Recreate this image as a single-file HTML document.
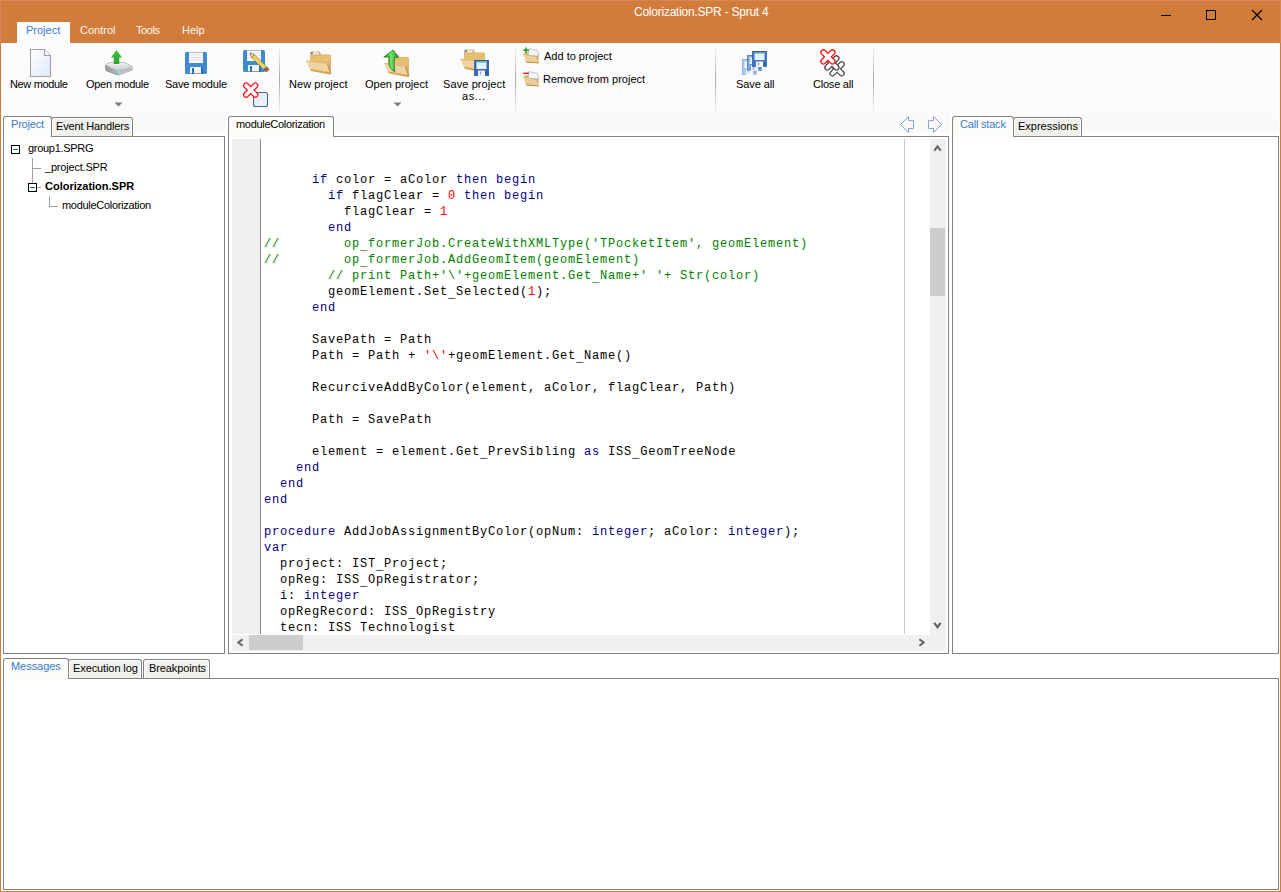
<!DOCTYPE html>
<html><head><meta charset="utf-8"><style>
*{margin:0;padding:0;box-sizing:border-box}
html,body{width:1281px;height:892px;overflow:hidden;background:#fff;font-family:"Liberation Sans",sans-serif;font-size:11px;color:#000}
.a{position:absolute}
.t{position:absolute;white-space:nowrap;line-height:1}
.box{position:absolute;border:1px solid #828282}
.tab{position:absolute;border:1px solid #828282;border-bottom:none;border-radius:3px 3px 0 0}
.code{position:absolute;left:261px;top:139px;width:669px;height:495px;overflow:hidden;background:#fff}
.code pre{position:absolute;left:3px;top:1px;font-family:"Liberation Mono",monospace;font-size:12px;letter-spacing:0.8px;line-height:16px;color:#000}
.u{position:relative;top:2px}.k{color:#000080}.n{color:#ff0000}.c{color:#008000}
</style></head><body>
<div class="a" style="left:0px;top:0px;width:1281px;height:892px;background:#ffffff;"></div>
<div class="a" style="left:1px;top:43px;width:1279px;height:72px;background:#fbfbfb;"></div>
<div class="a" style="left:1px;top:43px;width:1279px;height:1px;background:#ffffff;"></div>
<div class="a" style="left:1px;top:115px;width:225px;height:18px;background:#f9f9f9;"></div>
<div class="a" style="left:228px;top:115px;width:722px;height:18px;background:#f9f9f9;"></div>
<div class="a" style="left:952px;top:115px;width:327px;height:18px;background:#f9f9f9;"></div>
<div class="a" style="left:0px;top:0px;width:1281px;height:43px;background:#d27c3c;"></div>
<div class="a" style="left:0px;top:0px;width:1281px;height:1px;background:#d58a55;"></div>
<div class="a" style="left:0px;top:0px;width:1px;height:43px;background:#d58a55;"></div>
<div class="a" style="left:17px;top:22px;width:53px;height:21px;background:#fcfcfc;"></div>
<div class="t" style="left:634px;top:6px;font-size:12px;letter-spacing:-0.24px;color:#fff;">Colorization.SPR - Sprut 4</div>
<div class="t" style="left:26px;top:25px;font-size:11px;letter-spacing:0px;color:#3a7bd0;">Project</div>
<div class="t" style="left:80px;top:25px;font-size:11px;letter-spacing:0px;color:#fdf6f0;">Control</div>
<div class="t" style="left:136px;top:25px;font-size:11px;letter-spacing:-0.4px;color:#fdf6f0;">Tools</div>
<div class="t" style="left:182px;top:25px;font-size:11px;letter-spacing:0px;color:#fdf6f0;">Help</div>
<div class="a" style="left:1161px;top:15px;width:10px;height:1px;background:#000;"></div>
<div class="a" style="left:1206px;top:10px;width:10px;height:10px;border:1px solid #000"></div>
<svg class="a" style="left:1251px;top:9px;" width="12" height="12" viewBox="0 0 12 12"><path d="M1 1L11 11M11 1L1 11" stroke="#000" stroke-width="1.2"/></svg>
<div class="a" style="left:279px;top:45px;width:1px;height:69px;background:linear-gradient(to bottom,rgba(160,160,160,0),#a8a8a8 50%,rgba(160,160,160,0));"></div>
<div class="a" style="left:515px;top:45px;width:1px;height:69px;background:linear-gradient(to bottom,rgba(160,160,160,0),#a8a8a8 50%,rgba(160,160,160,0));"></div>
<div class="a" style="left:715px;top:45px;width:1px;height:69px;background:linear-gradient(to bottom,rgba(160,160,160,0),#a8a8a8 50%,rgba(160,160,160,0));"></div>
<div class="a" style="left:873px;top:45px;width:1px;height:69px;background:linear-gradient(to bottom,rgba(160,160,160,0),#a8a8a8 50%,rgba(160,160,160,0));"></div>
<div class="t" style="left:10px;top:79px;font-size:11px;letter-spacing:-0.35px;color:#000;">New module</div>
<div class="t" style="left:86px;top:79px;font-size:11px;letter-spacing:-0.3px;color:#000;">Open module</div>
<div class="t" style="left:165px;top:79px;font-size:11px;letter-spacing:-0.22px;color:#000;">Save module</div>
<div class="t" style="left:289px;top:79px;font-size:11px;letter-spacing:0.05px;color:#000;">New project</div>
<div class="t" style="left:365px;top:79px;font-size:11px;letter-spacing:0px;color:#000;">Open project</div>
<div class="t" style="left:443px;top:79px;font-size:11px;letter-spacing:0.1px;color:#000;">Save project</div>
<div class="t" style="left:462px;top:91px;font-size:11px;letter-spacing:0.55px;color:#000;">as...</div>
<div class="t" style="left:544px;top:51px;font-size:11px;letter-spacing:0px;color:#000;">Add to project</div>
<div class="t" style="left:543px;top:74px;font-size:11px;letter-spacing:0px;color:#000;">Remove from project</div>
<div class="t" style="left:736px;top:79px;font-size:11px;letter-spacing:-0.1px;color:#000;">Save all</div>
<div class="t" style="left:813px;top:79px;font-size:11px;letter-spacing:-0.22px;color:#000;">Close all</div>
<svg class="a" style="left:114px;top:102px;" width="9" height="5" viewBox="0 0 9 5"><path d="M0.5 0.5L8.5 0.5L4.5 4.5Z" fill="#7a7a7a"/></svg>
<svg class="a" style="left:393px;top:102px;" width="9" height="5" viewBox="0 0 9 5"><path d="M0.5 0.5L8.5 0.5L4.5 4.5Z" fill="#7a7a7a"/></svg>
<svg class="a" style="left:28px;top:47px" width="26" height="32" viewBox="28 47 26 32"><defs><linearGradient id="pg" x1="0" y1="0" x2="1" y2="1"><stop offset="0" stop-color="#ffffff"/><stop offset="1" stop-color="#dfe8f7"/></linearGradient></defs>
<path d="M30.5 49.5H44.5L50.5 55.5V76.5H30.5Z" fill="url(#pg)" stroke="#a0a0a0" stroke-width="1.1"/>
<path d="M44.5 49.5V55.5H50.5" fill="#f4f6fb" stroke="#a0a0a0" stroke-width="1.1"/></svg>
<svg class="a" style="left:102px;top:46px" width="34" height="32" viewBox="102 46 34 32"><defs><linearGradient id="dr" x1="0" y1="0" x2="0" y2="1"><stop offset="0" stop-color="#f2f2f4"/><stop offset="1" stop-color="#c9c9cc"/></linearGradient>
<linearGradient id="dr2" x1="0" y1="0" x2="1" y2="0"><stop offset="0" stop-color="#9a9a9a"/><stop offset="1" stop-color="#d8d8da"/></linearGradient>
<linearGradient id="ga" x1="0" y1="0" x2="0" y2="1"><stop offset="0" stop-color="#3fc43f"/><stop offset="1" stop-color="#27a22a"/></linearGradient></defs>
<path d="M105.5 65L110 62.5H124L132 66.5L132 70L118 75L106 70.5Z" fill="url(#dr2)" stroke="#8a8a8a" stroke-width="0.9"/>
<path d="M105.5 65L110 62.5H124L132 66.5L118 71Z" fill="url(#dr)"/>
<path d="M118 71L132 66.5V70L118 75Z" fill="#c4c4ca"/><path d="M120 71.5L130 68.3" stroke="#a8a8b0" stroke-width="0.8"/>
<rect x="116.5" y="70.5" width="2" height="3.5" fill="#4fe0d8"/>
<path d="M116.5 50L122 57.5H119.3V64H113.8V57.5H111Z" fill="url(#ga)"/></svg>
<svg class="a" style="left:183px;top:50px" width="26" height="26" viewBox="183 50 26 26"><g transform="translate(185 52) scale(1.0)">
<rect x="0" y="0" width="22" height="22" rx="1.5" fill="#3f8ad0"/>
<rect x="4" y="0" width="14" height="11" fill="#fbfbfd"/>
<path d="M4 0.5H18" stroke="#b8b8b8" stroke-width="1"/><path d="M4 3H18M4 5.5H18M4 8H18" stroke="#d6d6da" stroke-width="0.7"/>
<rect x="5" y="15" width="11" height="7" fill="#f3f3f5"/><path d="M5 21.5H16" stroke="#9a9a9a" stroke-width="1"/>
<rect x="7" y="16" width="2" height="6" fill="#2a74c0"/>
<rect x="16" y="15" width="2" height="7" fill="#1f6cc0"/>
</g></svg>
<svg class="a" style="left:241px;top:47px" width="30" height="28" viewBox="241 47 30 28"><g transform="translate(243 50) scale(1.0)">
<rect x="0" y="0" width="22" height="22" rx="1.5" fill="#3f8ad0"/>
<rect x="4" y="0" width="14" height="11" fill="#fbfbfd"/>
<path d="M4 0.5H18" stroke="#b8b8b8" stroke-width="1"/><path d="M4 3H18M4 5.5H18M4 8H18" stroke="#d6d6da" stroke-width="0.7"/>
<rect x="5" y="15" width="11" height="7" fill="#f3f3f5"/><path d="M5 21.5H16" stroke="#9a9a9a" stroke-width="1"/>
<rect x="7" y="16" width="2" height="6" fill="#2a74c0"/>
<rect x="16" y="15" width="2" height="7" fill="#1f6cc0"/>
</g>
<path d="M250 53L254.4 54.6L251.6 57.4Z" fill="#f3dcb0" stroke="#555" stroke-width="0.6"/>
<path d="M251.6 57.4L254.4 54.6L266.4 66.6L263.6 69.4Z" fill="#f2d356" stroke="#6a6a5a" stroke-width="0.6"/>
<path d="M263.6 69.4L266.4 66.6L267.4 67.6L264.6 70.4Z" fill="#3a9a3a"/>
<path d="M264.6 70.4L267.4 67.6L269.2 69.4L266.4 72.2Z" fill="#d84848" stroke="#6a4a4a" stroke-width="0.5"/>
<path d="M250 53L251.3 53.6L250.6 54.3Z" fill="#333"/></svg>
<svg class="a" style="left:240px;top:80px" width="32" height="30" viewBox="240 80 32 30"><defs><linearGradient id="sq" x1="0" y1="0" x2="1" y2="1"><stop offset="0" stop-color="#d8e4f6"/><stop offset="1" stop-color="#f4f8fd"/></linearGradient></defs>
<rect x="253.5" y="92.5" width="14" height="14" rx="2" fill="url(#sq)" stroke="#4a6888" stroke-width="1.1"/><path d="M246.1 85.5L255.29999999999998 94.69999999999999M255.29999999999998 85.5L246.1 94.69999999999999" stroke="#ff1a1a" stroke-width="6.2" stroke-linecap="round" fill="none"/><path d="M246.1 85.5L255.29999999999998 94.69999999999999M255.29999999999998 85.5L246.1 94.69999999999999" stroke="#ffffff" stroke-width="3.6" stroke-linecap="round" fill="none"/></svg>
<svg class="a" style="left:304px;top:49px" width="30" height="28" viewBox="304 49 30 28"><g transform="translate(306 50.5) scale(1.0)">
<path d="M4 2.5Q4 1 5.5 1H13Q14 1 14.5 2.5L15 4H23.5Q25 4 25 5.5V23.5L4.5 19.5Z" fill="#dcb36a"/>
<path d="M5.5 1.8H12.5V4H5.5Z" fill="#e9eef0"/><rect x="5.2" y="1.6" width="1.6" height="2" fill="#3a8a9a"/>
<path d="M4 5H24.5V12H4Z" fill="#e7bf72"/>
<path d="M0 10L20.5 12.5Q22 12.7 22.3 14L25 23.5L24 24L5.5 20.5Q4.5 20.3 4.2 19.2Z" fill="#eed3a0"/>
<path d="M0 10L20.5 12.5L21 13.2L1.2 11Z" fill="#dcae62"/>
<path d="M4.2 19.2L5.5 20.5L24 24L25 23.5L24.5 22L5 18.5Z" fill="#d6a656"/><path d="M21.5 13.5L24.8 23.3" stroke="#b89048" stroke-width="1.1"/>
</g></svg>
<svg class="a" style="left:380px;top:47px" width="34" height="32" viewBox="380 47 34 32"><g transform="translate(384 53) scale(1.0)">
<path d="M4 2.5Q4 1 5.5 1H13Q14 1 14.5 2.5L15 4H23.5Q25 4 25 5.5V23.5L4.5 19.5Z" fill="#dcb36a"/>
<path d="M5.5 1.8H12.5V4H5.5Z" fill="#e9eef0"/><rect x="5.2" y="1.6" width="1.6" height="2" fill="#3a8a9a"/>
<path d="M4 5H24.5V12H4Z" fill="#e7bf72"/>
<path d="M0 10L20.5 12.5Q22 12.7 22.3 14L25 23.5L24 24L5.5 20.5Q4.5 20.3 4.2 19.2Z" fill="#eed3a0"/>
<path d="M0 10L20.5 12.5L21 13.2L1.2 11Z" fill="#dcae62"/>
<path d="M4.2 19.2L5.5 20.5L24 24L25 23.5L24.5 22L5 18.5Z" fill="#d6a656"/><path d="M21.5 13.5L24.8 23.3" stroke="#b89048" stroke-width="1.1"/>
</g>
<defs><linearGradient id="ga2" x1="0" y1="0" x2="1" y2="0"><stop offset="0" stop-color="#1f8a22"/><stop offset="0.5" stop-color="#6ee86a"/><stop offset="1" stop-color="#1e8a22"/></linearGradient></defs>
<path d="M393.2 50L398.5 57.2H394.5Q393.5 64 394.8 72Q391.5 70 389.5 66Q388.3 61 389.5 57H383.8Z" fill="url(#ga2)" stroke="#1c7a1f" stroke-width="0.8"/></svg>
<svg class="a" style="left:458px;top:47px" width="34" height="32" viewBox="458 47 34 32"><g transform="translate(460 48.5) scale(1.0)">
<path d="M4 2.5Q4 1 5.5 1H13Q14 1 14.5 2.5L15 4H23.5Q25 4 25 5.5V23.5L4.5 19.5Z" fill="#dcb36a"/>
<path d="M5.5 1.8H12.5V4H5.5Z" fill="#e9eef0"/><rect x="5.2" y="1.6" width="1.6" height="2" fill="#3a8a9a"/>
<path d="M4 5H24.5V12H4Z" fill="#e7bf72"/>
<path d="M0 10L20.5 12.5Q22 12.7 22.3 14L25 23.5L24 24L5.5 20.5Q4.5 20.3 4.2 19.2Z" fill="#eed3a0"/>
<path d="M0 10L20.5 12.5L21 13.2L1.2 11Z" fill="#dcae62"/>
<path d="M4.2 19.2L5.5 20.5L24 24L25 23.5L24.5 22L5 18.5Z" fill="#d6a656"/><path d="M21.5 13.5L24.8 23.3" stroke="#b89048" stroke-width="1.1"/>
</g><g transform="translate(474 60) scale(1.0 1.0)" opacity="1.0">
<rect x="0" y="0" width="15" height="16" fill="#3b66b8"/>
<rect x="0" y="0" width="15" height="0.8" fill="#3a5a90"/>
<rect x="0" y="0" width="1" height="16" fill="#3b72c0"/>
<rect x="2.5" y="1" width="10" height="8" fill="#e6f2f8"/>
<rect x="2.5" y="1" width="10" height="1.6" fill="#5aaabb"/>
<rect x="4" y="10.5" width="7" height="5.5" fill="#f6f6f4"/>
<rect x="5.8" y="11.5" width="1.4" height="3" fill="#7aaaf0"/>
<rect x="12.3" y="11" width="1.2" height="3.5" fill="#2f4f88"/>
</g></svg>
<svg class="a" style="left:521px;top:46px" width="20" height="20" viewBox="521 46 20 20"><g>
<path d="M524.5 52.5H529L530 53.5H538.5V62.5H526Z" fill="#d4a95e"/>
<path d="M529 48.5L537.5 50.5L539 56.0L528 55.5Z" fill="#f4f5f8" stroke="#a9afb9" stroke-width="0.7"/>
<path d="M523 54.0L535 56.5Q536 56.8 536.5 57.5L539 63.0L526.5 62.0Z" fill="#ebcf98"/>
<path d="M526.5 62.0L539 63.0" stroke="#c39040" stroke-width="1"/>
<path d="M523 54.0L535 56.5" stroke="#d7b474" stroke-width="0.8"/>
</g><path d="M526 47.5V53.0M523.3 50.3H528.8" stroke="#1a9a1a" stroke-width="1.5"/></svg>
<svg class="a" style="left:521px;top:69px" width="20" height="20" viewBox="521 69 20 20"><g>
<path d="M524.5 75.5H529L530 76.5H538.5V85.5H526Z" fill="#d4a95e"/>
<path d="M529 71.5L537.5 73.5L539 79.0L528 78.5Z" fill="#f4f5f8" stroke="#a9afb9" stroke-width="0.7"/>
<path d="M523 77.0L535 79.5Q536 79.8 536.5 80.5L539 86.0L526.5 85.0Z" fill="#ebcf98"/>
<path d="M526.5 85.0L539 86.0" stroke="#c39040" stroke-width="1"/>
<path d="M523 77.0L535 79.5" stroke="#d7b474" stroke-width="0.8"/>
</g><path d="M523.3 73.3H528.8" stroke="#e02020" stroke-width="1.5"/></svg>
<svg class="a" style="left:740px;top:49px" width="30" height="28" viewBox="740 49 30 28"><g transform="translate(742 59) scale(1.0 1.0)" opacity="0.55">
<rect x="0" y="0" width="15" height="16" fill="#6aa0e0"/>
<rect x="0" y="0" width="15" height="0.8" fill="#3a5a90"/>
<rect x="0" y="0" width="1" height="16" fill="#3b72c0"/>
<rect x="2.5" y="1" width="10" height="8" fill="#e6f2f8"/>
<rect x="2.5" y="1" width="10" height="1.6" fill="#5aaabb"/>
<rect x="4" y="10.5" width="7" height="5.5" fill="#f6f6f4"/>
<rect x="5.8" y="11.5" width="1.4" height="3" fill="#7aaaf0"/>
<rect x="12.3" y="11" width="1.2" height="3.5" fill="#2f4f88"/>
</g><g transform="translate(747 55) scale(1.0 1.0)" opacity="0.8">
<rect x="0" y="0" width="15" height="16" fill="#5a90d8"/>
<rect x="0" y="0" width="15" height="0.8" fill="#3a5a90"/>
<rect x="0" y="0" width="1" height="16" fill="#3b72c0"/>
<rect x="2.5" y="1" width="10" height="8" fill="#e6f2f8"/>
<rect x="2.5" y="1" width="10" height="1.6" fill="#5aaabb"/>
<rect x="4" y="10.5" width="7" height="5.5" fill="#f6f6f4"/>
<rect x="5.8" y="11.5" width="1.4" height="3" fill="#7aaaf0"/>
<rect x="12.3" y="11" width="1.2" height="3.5" fill="#2f4f88"/>
</g><g transform="translate(752 51) scale(1.0 1.0)" opacity="1.0">
<rect x="0" y="0" width="15" height="16" fill="#4276c4"/>
<rect x="0" y="0" width="15" height="0.8" fill="#3a5a90"/>
<rect x="0" y="0" width="1" height="16" fill="#3b72c0"/>
<rect x="2.5" y="1" width="10" height="8" fill="#e6f2f8"/>
<rect x="2.5" y="1" width="10" height="1.6" fill="#5aaabb"/>
<rect x="4" y="10.5" width="7" height="5.5" fill="#f6f6f4"/>
<rect x="5.8" y="11.5" width="1.4" height="3" fill="#7aaaf0"/>
<rect x="12.3" y="11" width="1.2" height="3.5" fill="#2f4f88"/>
</g></svg>
<svg class="a" style="left:816px;top:46px" width="32" height="32" viewBox="816 46 32 32"><path d="M832.5 64.2L841.7 73.39999999999999M841.7 64.2L832.5 73.39999999999999" stroke="#505050" stroke-width="6.2" stroke-linecap="round" fill="none"/><path d="M832.5 64.2L841.7 73.39999999999999M841.7 64.2L832.5 73.39999999999999" stroke="#ffffff" stroke-width="3.6" stroke-linecap="round" fill="none"/><path d="M827.3 58.3L836.5 67.5M836.5 58.3L827.3 67.5" stroke="#505050" stroke-width="6.2" stroke-linecap="round" fill="none"/><path d="M827.3 58.3L836.5 67.5M836.5 58.3L827.3 67.5" stroke="#ffffff" stroke-width="3.6" stroke-linecap="round" fill="none"/><path d="M823.3 52.3L832.5 61.5M832.5 52.3L823.3 61.5" stroke="#ff1a1a" stroke-width="6.2" stroke-linecap="round" fill="none"/><path d="M823.3 52.3L832.5 61.5M832.5 52.3L823.3 61.5" stroke="#ffffff" stroke-width="3.6" stroke-linecap="round" fill="none"/></svg>
<div class="box" style="left:3px;top:136px;width:222px;height:518px;background:#fff"></div>
<div class="tab" style="left:51px;top:117px;width:82px;height:19px;background:#f0f0ec;box-shadow:inset 1px 1px 0 #fff,inset -1px 0 0 #fff"></div>
<div class="tab" style="left:3px;top:116px;width:49px;height:21px;background:#fdfdf8"></div>
<div class="t" style="left:11px;top:119px;font-size:11px;letter-spacing:-0.2px;color:#3a7bd0;">Project</div>
<div class="t" style="left:56px;top:121px;font-size:11px;letter-spacing:-0.15px;color:#000;">Event Handlers</div>
<div class="a" style="left:11px;top:145px;width:9px;height:9px;border:1px solid #000"></div>
<div class="a" style="left:13px;top:149px;width:5px;height:1px;background:#008080;"></div>
<div class="a" style="left:32px;top:158px;width:1px;height:25px;background:#a0a0a0;"></div>
<div class="a" style="left:33px;top:168px;width:8px;height:1px;background:#a0a0a0;"></div>
<div class="a" style="left:28px;top:183px;width:9px;height:9px;border:1px solid #000"></div>
<div class="a" style="left:30px;top:187px;width:5px;height:1px;background:#008080;"></div>
<div class="a" style="left:37px;top:187px;width:4px;height:1px;background:#a0a0a0;"></div>
<div class="a" style="left:49px;top:196px;width:1px;height:11px;background:#a0a0a0;"></div>
<div class="a" style="left:50px;top:206px;width:8px;height:1px;background:#a0a0a0;"></div>
<div class="t" style="left:28px;top:143px;font-size:11px;letter-spacing:-0.3px;color:#000;">group1.SPRG</div>
<div class="t" style="left:45px;top:162px;font-size:11px;letter-spacing:-0.2px;color:#000;">_project.SPR</div>
<div class="t" style="left:45px;top:181px;font-size:11px;letter-spacing:0px;color:#000;font-weight:bold">Colorization.SPR</div>
<div class="t" style="left:62px;top:200px;font-size:11px;letter-spacing:-0.3px;color:#000;">moduleColorization</div>
<div class="box" style="left:228px;top:136px;width:721px;height:518px;background:#fff"></div>
<div class="tab" style="left:228px;top:116px;width:106px;height:21px;background:#fdfdf8"></div>
<div class="t" style="left:236px;top:119px;font-size:11px;letter-spacing:-0.3px;color:#000;">moduleColorization</div>
<div class="a" style="left:232px;top:139px;width:28px;height:495px;background:#f0f0f0;"></div>
<div class="a" style="left:260px;top:139px;width:1px;height:495px;background:#8c8c8c;"></div>
<div class="code"><div class="a" style="left:643px;top:0;width:1px;height:495px;background:#c8c8c8"></div><pre>


      <span class="k">if</span> color = aColor <span class="k">then</span> <span class="k">begin</span>
        <span class="k">if</span> flagClear = <span class="n">0</span> <span class="k">then</span> <span class="k">begin</span>
          flagClear = <span class="n">1</span>
        <span class="k">end</span>
<span class="c">//        op<span class="u">_</span>formerJob.CreateWithXMLType('TPocketItem', geomElement)</span>
<span class="c">//        op<span class="u">_</span>formerJob.AddGeomItem(geomElement)</span>
        <span class="c">// print Path+'\'+geomElement.Get<span class="u">_</span>Name+' '+ Str(color)</span>
        geomElement.Set<span class="u">_</span>Selected(<span class="n">1</span>);
      <span class="k">end</span>

      SavePath = Path
      Path = Path + <span class="n">'\'</span>+geomElement.Get<span class="u">_</span>Name()

      RecurciveAddByColor(element, aColor, flagClear, Path)

      Path = SavePath

      element = element.Get<span class="u">_</span>PrevSibling <span class="k">as</span> ISS<span class="u">_</span>GeomTreeNode
    <span class="k">end</span>
  <span class="k">end</span>
<span class="k">end</span>

<span class="k">procedure</span> AddJobAssignmentByColor(opNum: <span class="k">integer</span>; aColor: <span class="k">integer</span>);
<span class="k">var</span>
  project: IST<span class="u">_</span>Project;
  opReg: ISS<span class="u">_</span>OpRegistrator;
  i: <span class="k">integer</span>
  opRegRecord: ISS<span class="u">_</span>OpRegistry
  tecn: ISS<span class="u">_</span>Technologist
  </pre></div>
<div class="a" style="left:930px;top:139px;width:16px;height:512px;background:#f0f0f0;"></div>
<div class="a" style="left:232px;top:635px;width:714px;height:16px;background:#f0f0f0;"></div>
<div class="a" style="left:930px;top:228px;width:15px;height:68px;background:#cdcdcd;"></div>
<div class="a" style="left:249px;top:635px;width:54px;height:15px;background:#cdcdcd;"></div>
<svg class="a" style="left:930px;top:139px;" width="16" height="16" viewBox="0 0 16 16"><path d="M4.3 11.7L7.5 7.4L10.7 11.7" fill="none" stroke="#606060" stroke-width="2"/></svg>
<svg class="a" style="left:930px;top:618px;" width="16" height="16" viewBox="0 0 16 16"><path d="M4.3 4.8L7.5 9.2L10.7 4.8" fill="none" stroke="#606060" stroke-width="2"/></svg>
<svg class="a" style="left:232px;top:635px;" width="16" height="16" viewBox="0 0 16 16"><path d="M10.6 4.2L6.4 7.5L10.6 10.8" fill="none" stroke="#606060" stroke-width="2"/></svg>
<svg class="a" style="left:914px;top:635px;" width="16" height="16" viewBox="0 0 16 16"><path d="M5.4 4.2L9.6 7.5L5.4 10.8" fill="none" stroke="#606060" stroke-width="2"/></svg>
<svg class="a" style="left:896px;top:112px;" width="50" height="24" viewBox="0 0 50 24"><path d="M4.5 12.5L12.5 4.5V8.5H17.5V16.5H12.5V20.5Z M45.5 12.5L37.5 4.5V8.5H32.5V16.5H37.5V20.5Z" fill="none" stroke="#8ea2cc" stroke-width="1"/></svg>
<div class="box" style="left:952px;top:136px;width:327px;height:518px;background:#fff"></div>
<div class="tab" style="left:1013px;top:117px;width:69px;height:19px;background:#f0f0ec;box-shadow:inset 1px 1px 0 #fff,inset -1px 0 0 #fff"></div>
<div class="tab" style="left:952px;top:116px;width:62px;height:21px;background:#fdfdf8"></div>
<div class="t" style="left:960px;top:119px;font-size:11px;letter-spacing:-0.2px;color:#3a7bd0;">Call stack</div>
<div class="t" style="left:1018px;top:121px;font-size:11px;letter-spacing:0px;color:#000;">Expressions</div>
<div class="box" style="left:3px;top:678px;width:1276px;height:212px;background:#fff"></div>
<div class="tab" style="left:68px;top:659px;width:74px;height:19px;background:#f0f0ec;box-shadow:inset 1px 1px 0 #fff,inset -1px 0 0 #fff"></div>
<div class="tab" style="left:143px;top:659px;width:67px;height:19px;background:#f0f0ec;box-shadow:inset 1px 1px 0 #fff,inset -1px 0 0 #fff"></div>
<div class="tab" style="left:3px;top:658px;width:66px;height:21px;background:#fdfdf8"></div>
<div class="t" style="left:11px;top:661px;font-size:11px;letter-spacing:-0.05px;color:#3a7bd0;">Messages</div>
<div class="t" style="left:73px;top:663px;font-size:11px;letter-spacing:-0.1px;color:#000;">Execution log</div>
<div class="t" style="left:149px;top:663px;font-size:11px;letter-spacing:-0.1px;color:#000;">Breakpoints</div>
<div class="a" style="left:0px;top:43px;width:1px;height:849px;background:#d27c3c;"></div>
<div class="a" style="left:1280px;top:43px;width:1px;height:849px;background:#d27c3c;"></div>
<div class="a" style="left:1280px;top:0px;width:1px;height:43px;background:#d58a55;"></div>
<div class="a" style="left:0px;top:891px;width:1281px;height:1px;background:#d27c3c;"></div>
</body></html>
